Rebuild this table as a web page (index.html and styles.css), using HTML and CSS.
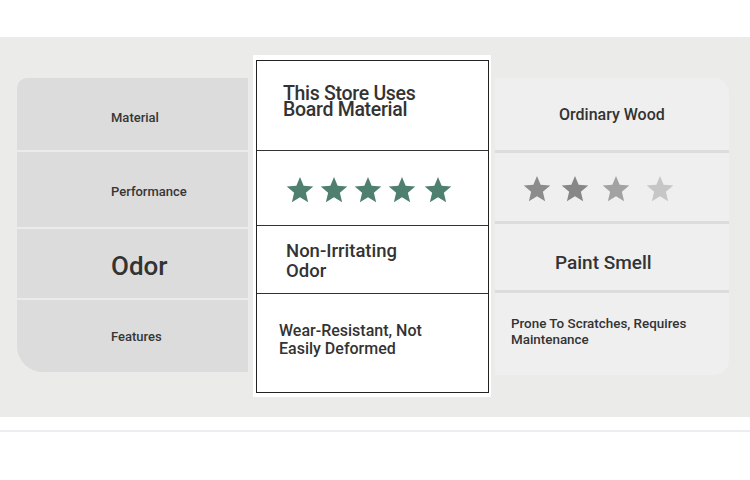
FILE: index.html
```html
<!DOCTYPE html>
<html>
<head>
<meta charset="utf-8">
<link rel="stylesheet" href="styles.css">
</head>
<body>
<div class="top"></div>
<div class="band">
  <div class="labels">
    <div class="lrow r1">Material</div>
    <div class="lrow r2">Performance</div>
    <div class="lrow r3 big">Odor</div>
    <div class="lrow r4">Features</div>
  </div>
  <div class="card">
    <div class="table">
      <div class="crow c1"><div class="t-board">This Store Uses<br>Board Material</div></div>
      <div class="crow c2">
        <div class="stars green">
          <svg viewBox="0 0 24 24"><polygon points="12,1.5 14.9,8.6 22.6,9.2 16.7,14.2 18.5,21.8 12,17.7 5.5,21.8 7.3,14.2 1.4,9.2 9.1,8.6"/></svg>
          <svg viewBox="0 0 24 24"><polygon points="12,1.5 14.9,8.6 22.6,9.2 16.7,14.2 18.5,21.8 12,17.7 5.5,21.8 7.3,14.2 1.4,9.2 9.1,8.6"/></svg>
          <svg viewBox="0 0 24 24"><polygon points="12,1.5 14.9,8.6 22.6,9.2 16.7,14.2 18.5,21.8 12,17.7 5.5,21.8 7.3,14.2 1.4,9.2 9.1,8.6"/></svg>
          <svg viewBox="0 0 24 24"><polygon points="12,1.5 14.9,8.6 22.6,9.2 16.7,14.2 18.5,21.8 12,17.7 5.5,21.8 7.3,14.2 1.4,9.2 9.1,8.6"/></svg>
          <svg class="last" viewBox="0 0 24 24"><polygon points="12,1.5 14.9,8.6 22.6,9.2 16.7,14.2 18.5,21.8 12,17.7 5.5,21.8 7.3,14.2 1.4,9.2 9.1,8.6"/></svg>
        </div>
      </div>
      <div class="crow c3"><div class="t-odor">Non-Irritating<br>Odor</div></div>
      <div class="crow c4"><div class="t-wear">Wear-Resistant, Not<br>Easily Deformed</div></div>
    </div>
  </div>
  <div class="other">
    <div class="orow o1"><span class="t-wood">Ordinary Wood</span></div>
    <div class="orow o2">
      <div class="stars grey">
        <svg class="s1" viewBox="0 0 24 24"><polygon points="12,1.5 14.9,8.6 22.6,9.2 16.7,14.2 18.5,21.8 12,17.7 5.5,21.8 7.3,14.2 1.4,9.2 9.1,8.6"/></svg>
        <svg class="s2" viewBox="0 0 24 24"><polygon points="12,1.5 14.9,8.6 22.6,9.2 16.7,14.2 18.5,21.8 12,17.7 5.5,21.8 7.3,14.2 1.4,9.2 9.1,8.6"/></svg>
        <svg class="s3" viewBox="0 0 24 24"><polygon points="12,1.5 14.9,8.6 22.6,9.2 16.7,14.2 18.5,21.8 12,17.7 5.5,21.8 7.3,14.2 1.4,9.2 9.1,8.6"/></svg>
        <svg class="s4" viewBox="0 0 24 24"><polygon points="12,1.5 14.9,8.6 22.6,9.2 16.7,14.2 18.5,21.8 12,17.7 5.5,21.8 7.3,14.2 1.4,9.2 9.1,8.6"/></svg>
      </div>
    </div>
    <div class="orow o3"><span class="t-paint">Paint Smell</span></div>
    <div class="orow o4"><span class="t-prone">Prone To Scratches, Requires<br>Maintenance</span></div>
  </div>
</div>
<div class="bottom"><div class="rule"></div></div>
</body>
</html>
```
FILE: styles.css
```css
* { box-sizing: border-box; }
html, body { margin: 0; padding: 0; background: #fff; }
body {
  width: 750px;
  height: 480px;
  overflow: hidden;
  font-family: Roboto, "Liberation Sans", sans-serif;
  color: #333;
}
.top { height: 37px; background: #fff; }
.band {
  height: 380px;
  background: #ebebea;
  display: flex;
  align-items: flex-start;
  padding-left: 17px;
}
.labels {
  width: 231px;
  margin-top: 41px;
  background: #dcdcdc;
  border-radius: 10px 0 0 26px;
  display: flex;
  flex-direction: column;
  overflow: hidden;
}
.lrow {
  display: flex;
  align-items: center;
  padding-left: 94px;
  font-size: 13px;
  font-weight: 500;
  color: #363636;
}
.lrow + .lrow { border-top: 2px solid #ebebeb; }
.r1 { height: 72px; padding-top: 6px; }
.r2 { height: 77px; padding-top: 4px; }
.r3 { height: 71px; padding-top: 4px; }
.r4 { height: 74px; }
.big { font-size: 26px; font-weight: 500; color: #333; }

.card {
  width: 238px;
  margin-left: 5px;
  margin-top: 18px;
  background: #fff;
  padding: 5px 2px 4px 3px;
}
.table {
  border: 1px solid #222;
  display: flex;
  flex-direction: column;
}
.crow {
  display: flex;
  align-items: center;
  border-bottom: 1px solid #333;
}
.crow:last-child { border-bottom: 0; }
.c1 { height: 90px; padding-left: 26px; padding-bottom: 8px; }
.c2 { height: 75px; padding-left: 28px; padding-top: 3px; }
.c3 { height: 68px; padding-left: 29px; padding-top: 2px; }
.c4 { height: 98px; padding-left: 22px; padding-bottom: 6px; }
.t-board {
  font-size: 19.5px;
  line-height: 16px;
  font-weight: 500;
  color: #333;
  letter-spacing: -0.3px;
}
.t-odor {
  font-size: 18.5px;
  line-height: 20px;
  font-weight: 500;
  color: #333;
}
.t-wear {
  font-size: 16px;
  line-height: 18px;
  font-weight: 500;
  color: #333;
}
.stars { display: flex; align-items: center; }
.stars svg { width: 30px; height: 30px; display: block; }
.green { gap: 4px; }
.green svg { fill: #4e7f6f; }
.green .last { margin-left: 2px; }

.other {
  width: 234px;
  margin-left: 4px;
  margin-top: 41px;
  background: #efefef;
  border-radius: 0 15px 15px 0;
  display: flex;
  flex-direction: column;
}
.orow {
  display: flex;
  align-items: center;
}
.orow + .orow { border-top: 3px solid #dcdcdc; }
.o1 { height: 72px; padding-left: 64px; }
.o2 { height: 71px; padding-left: 27px; padding-top: 3px; }
.o3 { height: 69px; padding-left: 60px; padding-top: 10px; }
.o4 { height: 85px; padding-left: 16px; padding-bottom: 4px; }
.t-wood { font-size: 16px; font-weight: 500; color: #333; }
.t-paint { font-size: 19px; font-weight: 500; color: #333; }
.t-prone { font-size: 13.4px; line-height: 16px; font-weight: 500; color: #333; }
.grey svg { width: 30px; height: 30px; }
.grey .s1 { fill: #8c8c8c; }
.grey .s2 { fill: #878787; margin-left: 8px; }
.grey .s3 { fill: #a2a2a2; margin-left: 11px; }
.grey .s4 { fill: #c6c6c6; margin-left: 14px; }

.bottom { height: 63px; background: #fff; padding-top: 13px; }
.rule { height: 2px; background: #ececf1; }
```
